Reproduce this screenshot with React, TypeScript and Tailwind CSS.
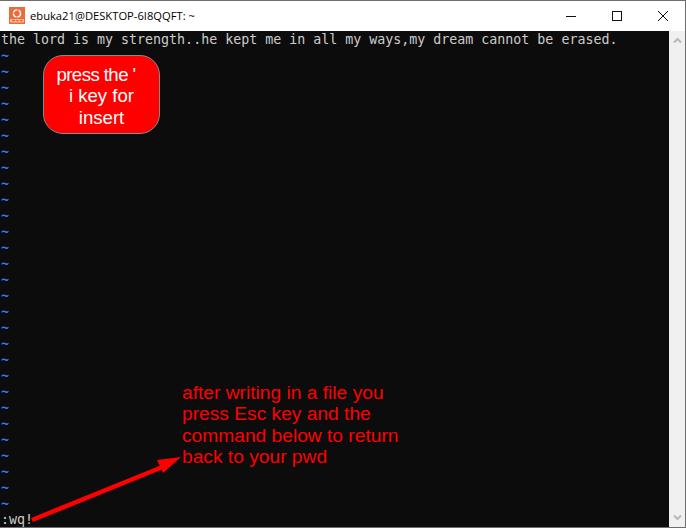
const tildes = Array.from({ length: 29 }, (_, i) => i);

function Logo() {
  return (
    <svg width="16" height="17" viewBox="0 0 16 17" className="block">
      <rect width="16" height="17" fill="#ee6a3a" />
      <circle cx="8" cy="6.5" r="3.6" fill="none" stroke="#ffffff" strokeWidth="1.4" strokeDasharray="5 1" />
      <rect x="1" y="12" width="14" height="3.5" fill="#f9b899" />
      <path d="M3 13.7h3M7 13.7h2.5M11 13.7h2.5" stroke="#e95420" strokeWidth="1" />
    </svg>
  );
}

function Chevron({ up }: { up?: boolean }) {
  return (
    <svg width="9" height="7" viewBox="0 0 9 7">
      <path d={up ? "M1 5.5L4.5 2L8 5.5" : "M1 1.5L4.5 5L8 1.5"} fill="none" stroke="#b8b8b8" strokeWidth="2" />
    </svg>
  );
}

export default function App() {
  return (
    <div className="w-[686px] h-[528px] overflow-hidden flex flex-col bg-white border-t border-b border-r border-[#6e6e6e] relative">
      <div className="h-[30px] shrink-0 flex items-center bg-white">
        <div className="ml-[9px] mr-[5px] -mt-[1px]"><Logo /></div>
        <span className="text-[11.2px] text-black font-['Open_Sans',sans-serif]">ebuka21@DESKTOP-6I8QQFT: ~</span>
        <div className="ml-auto flex items-center pr-[16px] gap-[34px]">
          <svg width="12" height="12" viewBox="0 0 12 12"><path d="M1 6.5h10" stroke="#111" strokeWidth="1" /></svg>
          <svg width="12" height="12" viewBox="0 0 12 12"><rect x="1.5" y="1.5" width="9" height="9" fill="none" stroke="#111" /></svg>
          <svg width="12" height="12" viewBox="0 0 12 12"><path d="M1 1l10 10M11 1L1 11" stroke="#111" /></svg>
        </div>
      </div>
      <div className="flex-1 flex min-h-0">
        <div className="flex-1 bg-[#0c0c0c] font-['DejaVu_Sans_Mono',monospace] text-[13.3px] leading-[16px] text-[#cccccc] pl-[1px] pt-px whitespace-pre">
          <div>the lord is my strength..he kept me in all my ways,my dream cannot be erased.</div>
          {tildes.map((i) => <div key={i} className="text-[#3b78ff] font-bold">~</div>)}
          <div>:wq!</div>
        </div>
        <div className="w-[16px] bg-[#f0f0f0] flex flex-col items-center justify-between pt-[6px] pb-[6px]">
          <Chevron up />
          <Chevron />
        </div>
      </div>
      <div className="absolute left-[43px] top-[54px] w-[117px] h-[79px] rounded-[20px] bg-[#ff0000] border border-[#8a8a8a] text-white text-center font-['Liberation_Sans',sans-serif] text-[18.6px] leading-[21.5px] pt-[3px] flex flex-col items-center justify-center">
        <span className="tracking-[-0.55px] mr-[11px]">press the '</span>
        <span>i key for</span>
        <span>insert</span>
      </div>
      <div className="absolute left-[182px] top-[381px] w-[240px] text-[#ff0000] font-['Liberation_Sans',sans-serif] text-[19.2px] leading-[21.4px]">
        after writing in a file you<br />press Esc key and the<br />command below to return<br />back to your pwd
      </div>
      <svg className="absolute left-0 top-0 pointer-events-none" width="686" height="528">
        <path d="M32 519L165 465" stroke="#ff0000" strokeWidth="4.5" />
        <path d="M181 456L157 459L163 472Z" fill="#ff0000" />
      </svg>
    </div>
  );
}
